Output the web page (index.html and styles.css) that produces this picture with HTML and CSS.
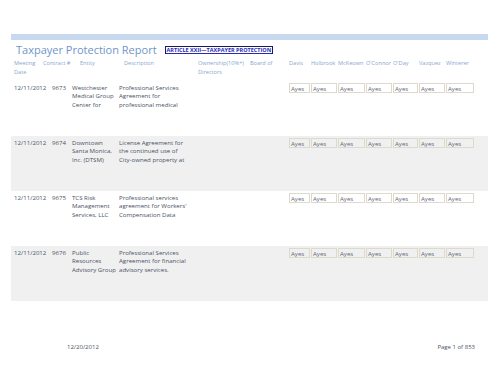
FILE: index.html
```html
<!DOCTYPE html>
<html>
<head>
<meta charset="utf-8">
<link rel="stylesheet" href="styles.css">
</head>
<body>
<div class="page">
  <div class="bar"></div>
  <div class="titlerow">
    <h1 class="title">Taxpayer Protection Report</h1>
    <a class="article">ARTICLE XXII—TAXPAYER PROTECTION</a>
  </div>
  <div class="head">
    <div>Meeting<br>Date</div>
    <div>Contract #</div>
    <div>Entity</div>
    <div>Description</div>
    <div>Ownership(10%+)<br>Directors</div>
    <div>Board of</div>
    <div>Davis</div>
    <div>Holbrook</div>
    <div>McKeown</div>
    <div>O'Connor</div>
    <div>O'Day</div>
    <div>Vazquez</div>
    <div>Winterer</div>
  </div>

  <div class="row">
    <div>12/11/2012</div>
    <div>9673</div>
    <div>Westchester<br>Medical Group<br>Center for</div>
    <div>Professional Services<br>Agreement for<br>professional medical</div>
    <div></div>
    <div class="votes"><span>Ayes</span><span>Ayes</span><span>Ayes</span><span>Ayes</span><span>Ayes</span><span>Ayes</span><span>Ayes</span></div>
  </div>
  <div class="row alt">
    <div>12/11/2012</div>
    <div>9674</div>
    <div>Downtown<br>Santa Monica,<br>Inc. (DTSM)</div>
    <div>License Agreement for<br>the continued use of<br>City-owned property at</div>
    <div></div>
    <div class="votes"><span>Ayes</span><span>Ayes</span><span>Ayes</span><span>Ayes</span><span>Ayes</span><span>Ayes</span><span>Ayes</span></div>
  </div>
  <div class="row">
    <div>12/11/2012</div>
    <div>9675</div>
    <div>TCS Risk<br>Management<br>Services, LLC</div>
    <div>Professional services<br>agreement for Workers'<br>Compensation Data</div>
    <div></div>
    <div class="votes"><span>Ayes</span><span>Ayes</span><span>Ayes</span><span>Ayes</span><span>Ayes</span><span>Ayes</span><span>Ayes</span></div>
  </div>
  <div class="row alt">
    <div>12/11/2012</div>
    <div>9676</div>
    <div>Public<br>Resources<br>Advisory Group</div>
    <div>Professional Services<br>Agreement for financial<br>advisory services.</div>
    <div></div>
    <div class="votes"><span>Ayes</span><span>Ayes</span><span>Ayes</span><span>Ayes</span><span>Ayes</span><span>Ayes</span><span>Ayes</span></div>
  </div>

  <div class="footer">
    <span>12/20/2012</span>
    <span>Page 1 of 853</span>
  </div>
</div>
</body>
</html>
```
FILE: styles.css
```css
html, body {
  margin: 0;
  padding: 0;
  background: #ffffff;
}
body {
  font-family: "Open Sans", "DejaVu Sans", sans-serif;
  color: #4a5264;
}
.page {
  width: 477px;
  margin-left: 11px;
  padding-top: 34px;
}
.bar {
  height: 6px;
  background: #c7d8ef;
}
.titlerow {
  display: flex;
  align-items: flex-end;
  height: 17px;
  padding-left: 5px;
}
.title {
  margin: 0;
  font-weight: normal;
  font-size: 11px;
  line-height: 14px;
  color: #6f95c8;
}
.article {
  margin-left: 8px;
  margin-bottom: 3px;
  border: 1px solid #16166a;
  padding: 0 1px;
  font-size: 5.5px;
  line-height: 6.5px;
  color: #2a2ab4;
  text-decoration: underline;
  font-weight: bold;
}
.head {
  display: grid;
  grid-template-columns: 29px 37px 44px 74px 52px 39px 22px 27px 28px 27px 26px 27px 29px;
  padding-left: 3px;
  margin-top: 2px;
  font-size: 5.6px;
  line-height: 8.5px;
  color: #8aa6d0;
  height: 22px;
  white-space: nowrap;
}
.row {
  display: grid;
  grid-template-columns: 38px 20px 47px 78px 92px 186px;
  padding-left: 3px;
  height: 55px;
  box-sizing: border-box;
  padding-top: 3px;
  font-size: 6.1px;
  line-height: 8.3px;
  white-space: nowrap;
}
.row.alt {
  background: #f0f0f0;
}
.votes {
  display: grid;
  grid-template-columns: 22px 27px 28px 27px 26px 27px 29px;
  align-self: start;
  margin-top: -1px;
}
.votes span {
  display: block;
  height: 10px;
  line-height: 10px;
  margin-right: 1px;
  padding-left: 1px;
  border: 1px solid #ddd9cc;
  box-sizing: border-box;
  color: #5f687a;
}
.footer {
  display: flex;
  justify-content: space-between;
  margin-top: 42px;
  padding-left: 56px;
  padding-right: 13px;
  font-size: 6px;
  line-height: 8px;
  color: #4a5264;
}
```
